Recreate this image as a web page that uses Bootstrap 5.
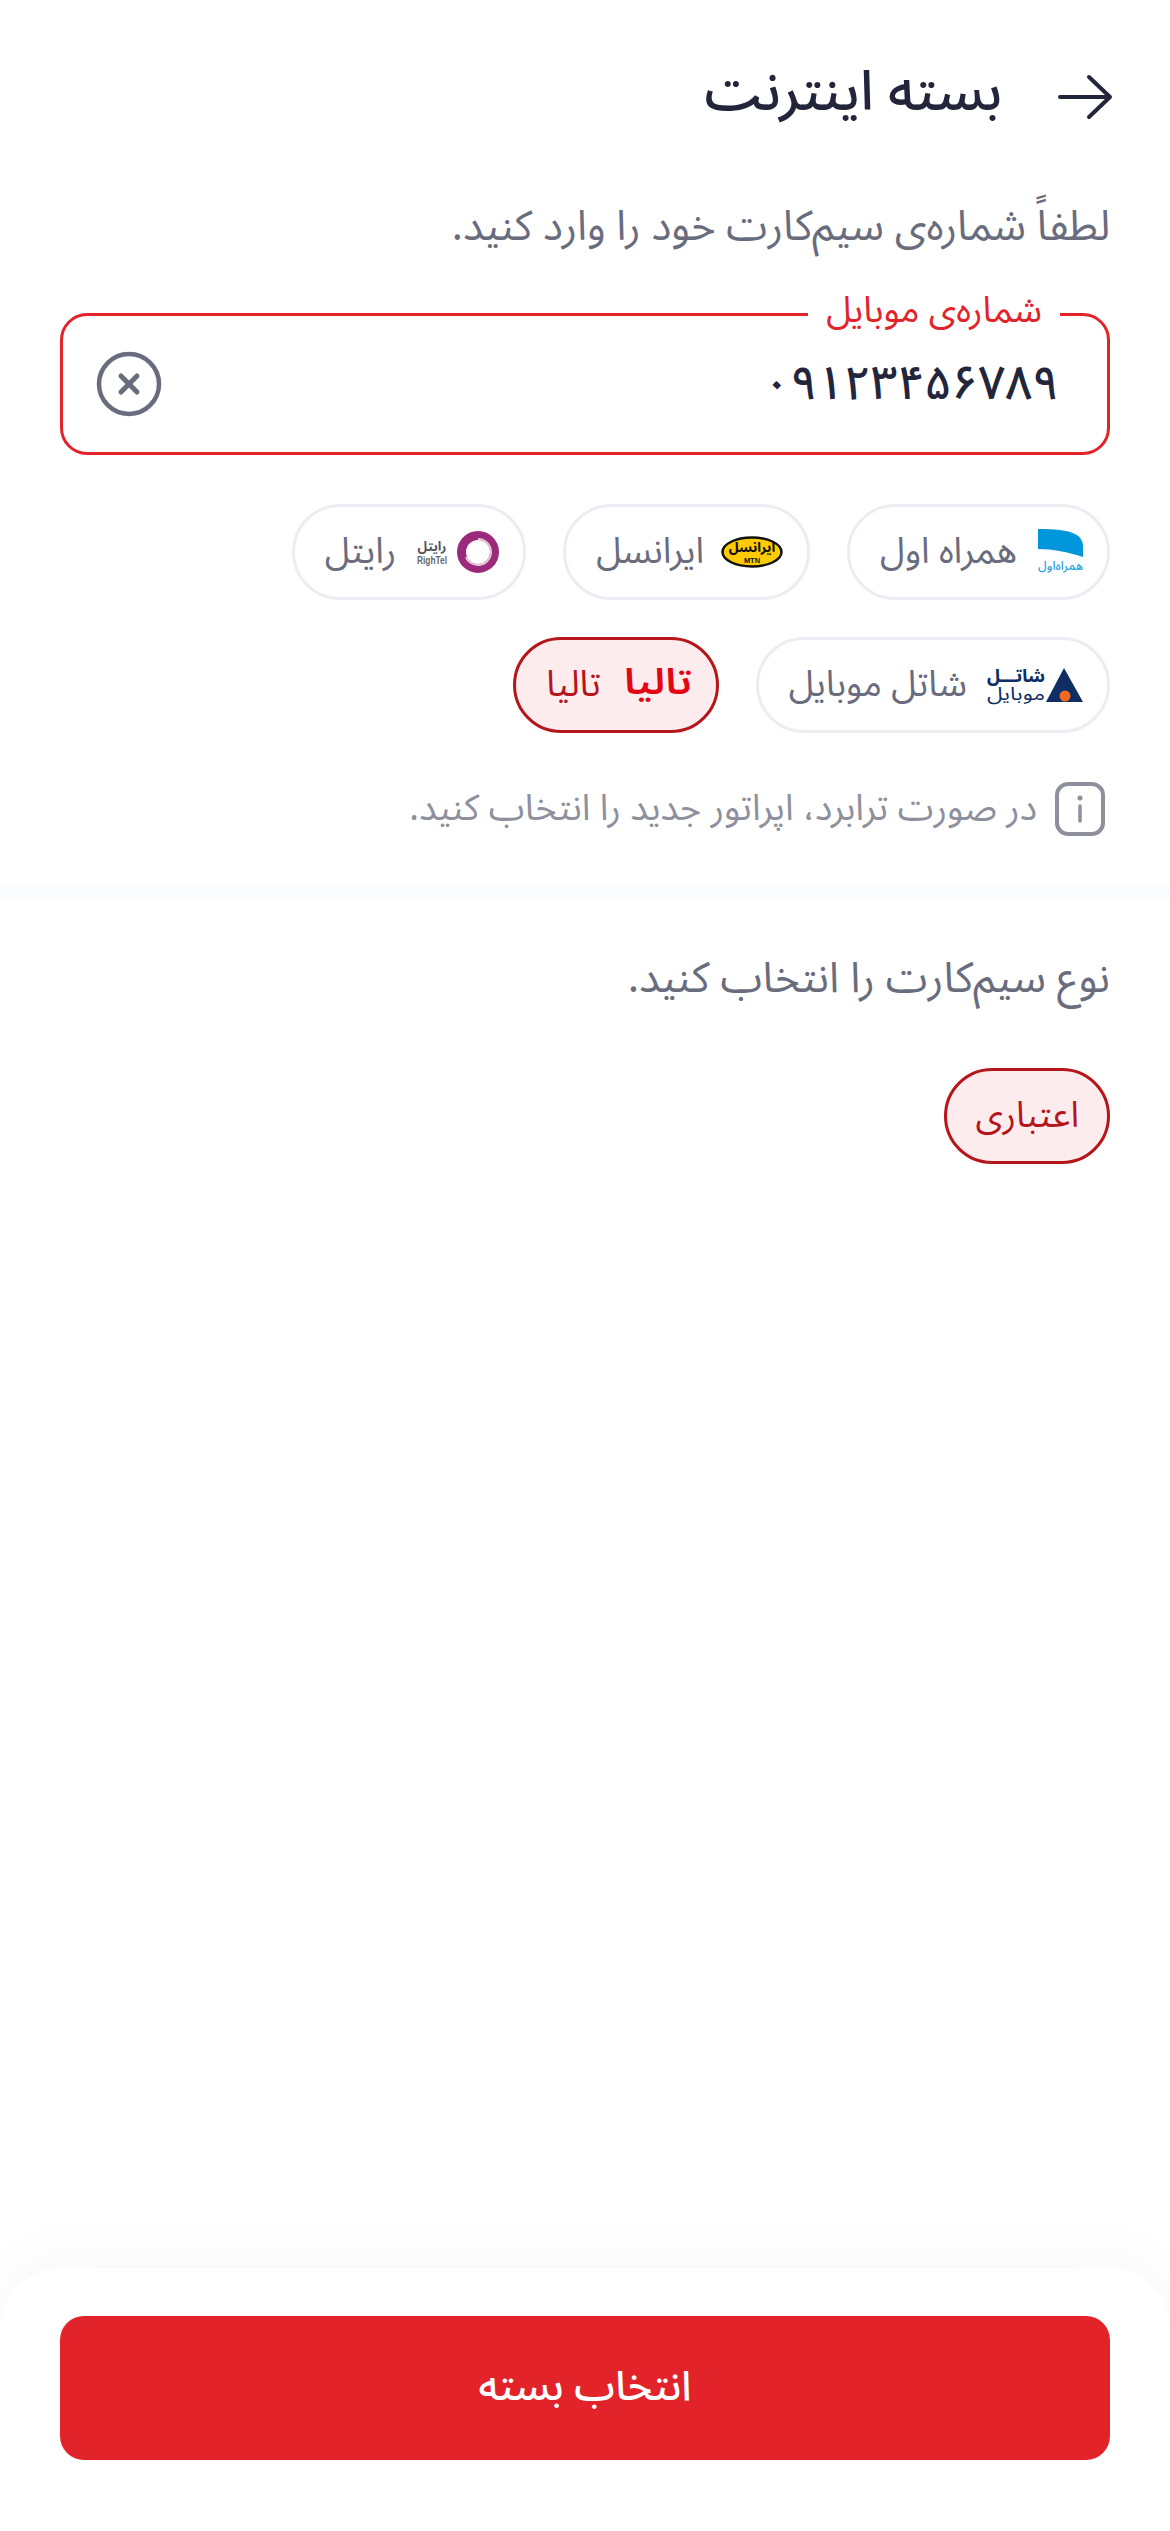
<!DOCTYPE html>
<html lang="fa" dir="rtl">
<head>
<meta charset="utf-8">
<title>بسته اینترنت</title>
<link href="https://cdn.jsdelivr.net/npm/bootstrap@5.3.0/dist/css/bootstrap.min.css" rel="stylesheet">
<style>
html,body{height:100%;}
body{font-family:"Noto Sans Arabic","Vazirmatn","DejaVu Sans",sans-serif;background:#fff;color:#23263b;}
.screen{min-height:2531px;}
.topbar{height:76px;margin-top:55px;padding:0 58px 0 60px;gap:56px;}
.back-arrow{margin-top:8px;}
.page-title{font-size:55px;font-weight:500;margin:0;color:#23263b;line-height:76px;}
.prompt{font-size:41.700px;color:#696c7d;margin:0;line-height:60px;}
.prompt-wide{font-size:42.400px;}
.section-a{padding:0 60px;margin-top:66px;}
.field-box{height:142px;border:3px solid #e2242a;border-radius:27px;margin-top:56px;padding:0 48px 0 34px;position:relative;}
.field-tag{position:absolute;top:-31px;right:47px;background:#fff;padding:0 18px;color:#e2242a;font-size:36px;line-height:52px;}
.field-value{font-size:47px;font-weight:500;color:#23263b;line-height:60px;}
.chips{gap:37px;margin-top:49px;}
.chip-item{height:96px;border:3px solid #ecedf3;border-radius:48px;padding:0 24px 0 30px;gap:21px;font-size:36px;color:#696c7d;background:#fff;white-space:nowrap;}
.chip-on{border-color:#b5161b;background:#fcecee;color:#b5161b;}
.chip-plain{padding:0 28px;}
.chip-tight{gap:17px;}
.chip-mid{gap:20px;}
.chip-wide{gap:23px;}
.note-row{margin-top:48px;gap:18px;height:56px;padding-right:5px;}
.note-text{font-size:36.300px;color:#8e909d;}
.band{height:12px;background:#fafbff;margin-top:49px;}
.section-b{padding:51px 60px 0;}
.type-row{margin-top:59px;}
.bottom-panel{margin-top:auto;background:#fff;border-radius:60px 60px 0 0;padding:48px 60px 71px;box-shadow:0 -12px 60px rgba(0,0,0,.03);}
.submit-btn{display:block;width:100%;height:144px;background:#e2242a;color:#fff;border:0;border-radius:24px;font-size:41px;font-weight:500;}
svg{display:block;flex:none;overflow:visible;}
svg text{font-family:"Noto Sans Arabic","DejaVu Sans",sans-serif;}
svg text.latin{font-family:"Liberation Sans",sans-serif;}
</style>
</head>
<body>
<div class="screen d-flex flex-column">
  <div class="topbar d-flex align-items-center">
    <svg class="back-arrow" width="54" height="44" viewBox="0 0 54 44" fill="none" stroke="#23263b" stroke-width="4" stroke-linecap="round" stroke-linejoin="round"><path d="M2 22H51M31 2l21 20-21 20"/></svg>
    <h1 class="page-title">بسته اینترنت</h1>
  </div>
  <div class="section-a">
    <p class="prompt">لطفاً شماره‌ی سیم‌کارت خود را وارد کنید.</p>
    <div class="field-box d-flex align-items-center justify-content-between">
      <span class="field-tag">شماره‌ی موبایل</span>
      <span class="field-value">۰۹۱۲۳۴۵۶۷۸۹</span>
      <svg width="64" height="64" viewBox="0 0 64 64" fill="none" stroke="#696c7d"><circle cx="32" cy="32" r="30" stroke-width="4.500"/><path d="M24 24l16 16M40 24L24 40" stroke-width="5" stroke-linecap="round"/></svg>
    </div>
    <div class="chips d-flex flex-wrap">
      <div class="chip-item d-flex align-items-center">
        <svg width="45" height="46" viewBox="0 0 45 46"><path d="M0 0c16 0 30 1 37 5 6 3 8 8 8 12v11C30 23 15 20 0 20z" fill="#0096dc"/><text x="22.500" y="41" text-anchor="middle" font-size="12" font-weight="500" fill="#2a9fe0" textLength="45" lengthAdjust="spacingAndGlyphs">همراه‌اول</text></svg>
        <span>همراه اول</span>
      </div>
      <div class="chip-item chip-tight d-flex align-items-center">
        <svg width="62" height="32" viewBox="0 0 62 32"><ellipse cx="31" cy="16" rx="29.500" ry="14.500" fill="#fecb00" stroke="#111" stroke-width="2.500"/><text x="31" y="16" text-anchor="middle" font-size="13" font-weight="800" fill="#111">ایرانسل</text><text class="latin" x="31" y="27" text-anchor="middle" font-size="7.500" font-weight="700" fill="#111">MTN</text></svg>
        <span>ایرانسل</span>
      </div>
      <div class="chip-item d-flex align-items-center">
        <svg width="82" height="42" viewBox="0 0 82 42"><circle cx="61" cy="21" r="16.500" fill="#fff" stroke="#9b2a7c" stroke-width="9"/><path d="M61 8a13 13 0 1 1-12 18" fill="none" stroke="#e4c6da" stroke-width="2"/><text x="15" y="20" text-anchor="middle" font-size="13" font-weight="700" fill="#555">رایتل</text><text class="latin" x="15" y="33" text-anchor="middle" font-size="10" font-weight="700" fill="#666" textLength="30" lengthAdjust="spacingAndGlyphs">RighTel</text></svg>
        <span>رایتل</span>
      </div>
      <div class="chip-item chip-mid d-flex align-items-center">
        <svg width="96" height="36" viewBox="0 0 96 36"><path d="M59 35L77 1l19 34z" fill="#0f2e63"/><circle cx="78" cy="29" r="5.500" fill="#f26a21"/><text x="29" y="15" text-anchor="middle" font-size="17" font-weight="800" fill="#0f2e63" textLength="58" lengthAdjust="spacingAndGlyphs">شاتـــل</text><text x="29" y="33" text-anchor="middle" font-size="18" fill="#0f2e63" textLength="58" lengthAdjust="spacingAndGlyphs">موبایل</text></svg>
        <span>شاتل موبایل</span>
      </div>
      <div class="chip-item chip-on chip-wide d-flex align-items-center">
        <svg width="68" height="36" viewBox="0 0 68 36"><text x="34" y="27" text-anchor="middle" font-size="36" font-weight="600" fill="#e30613" textLength="68" lengthAdjust="spacingAndGlyphs">تالیا</text></svg>
        <span>تالیا</span>
      </div>
    </div>
    <div class="note-row d-flex align-items-center">
      <svg width="50" height="54" viewBox="0 0 50 54" fill="none" stroke="#8e909d"><rect x="2" y="2" width="46" height="50" rx="11" stroke-width="4"/><path d="M25 24v15" stroke-width="3.500" stroke-linecap="round"/><circle cx="25" cy="16" r="2.500" fill="#8e909d" stroke="none"/></svg>
      <span class="note-text">در صورت ترابرد، اپراتور جدید را انتخاب کنید.</span>
    </div>
  </div>
  <div class="band"></div>
  <div class="section-b">
    <p class="prompt prompt-wide">نوع سیم‌کارت را انتخاب کنید.</p>
    <div class="type-row d-flex">
      <div class="chip-item chip-plain chip-on d-flex align-items-center">اعتباری</div>
    </div>
  </div>
  <div class="bottom-panel">
    <button type="button" class="btn submit-btn">انتخاب بسته</button>
  </div>
</div>
<script src="https://cdn.jsdelivr.net/npm/bootstrap@5.3.0/dist/js/bootstrap.bundle.min.js"></script>
</body>
</html>
